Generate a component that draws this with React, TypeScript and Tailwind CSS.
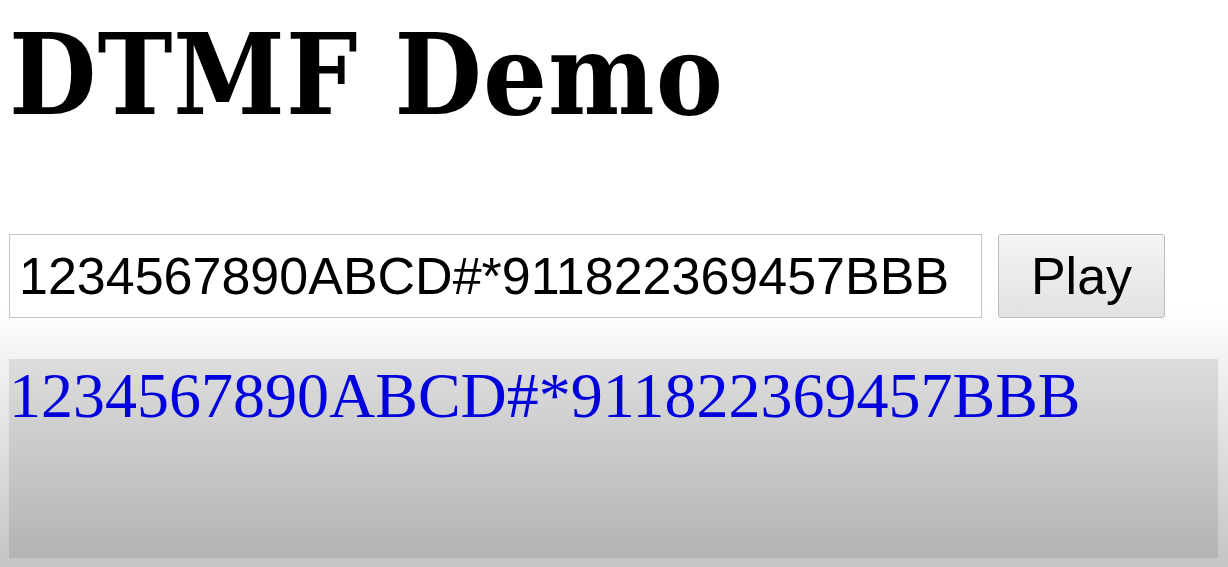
import { useState } from "react";

const DIGITS = "1234567890ABCD#*911822369457BBB";

export default function App() {
  const [value, setValue] = useState(DIGITS);
  const [played, setPlayed] = useState(DIGITS);

  return (
    <div className="h-[567px] overflow-hidden bg-[linear-gradient(to_bottom,#ffffff_0%,#ffffff_54%,#f4f4f4_62%,#c4c4c4_100%)] px-[9px]">
      <h1 className="mt-[19px] text-[112px] leading-none font-bold tracking-[1px] text-black [font-family:'DejaVu_Serif_Condensed','DejaVu_Serif',serif] [font-stretch:condensed]">
        DTMF Demo
      </h1>

      {/* input + play */}
      <div className="mt-[103px] flex gap-[16px]">
        <input
          value={value}
          onChange={(e) => setValue(e.target.value)}
          className="h-[84px] w-[973px] border border-[#c4c4c4] bg-white pl-[9px] text-[52px] text-black outline-none [font-family:'Liberation_Sans',Arial,sans-serif]"
        />
        <button
          onClick={() => setPlayed(value)}
          className="h-[84px] w-[167px] rounded-[3px] border border-[#bcbcbc] bg-[linear-gradient(to_bottom,#f4f4f4,#e2e2e2)] text-[52px] text-black [font-family:'Liberation_Sans',Arial,sans-serif]"
        >
          Play
        </button>
      </div>

      {/* output */}
      <div className="mt-[41px] h-[199px] w-[1209px] bg-[linear-gradient(to_bottom,#dddddd,#b3b3b3)] text-[64px] leading-[1.15] text-[#0000dd] [font-family:'Liberation_Serif','Times_New_Roman',serif]">
        {played}
      </div>
    </div>
  );
}
